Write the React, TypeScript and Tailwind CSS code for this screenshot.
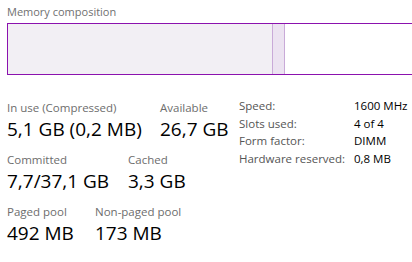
const font = { fontFamily: '"Segoe UI", "Open Sans", "Noto Sans", sans-serif' };

function Stat({ label, value, w }: { label: string; value: string; w: string }) {
  return (
    <div className={`${w} shrink-0`}>
      <div className="text-[11.5px] leading-[16px] text-[#6d6d6d]">{label}</div>
      <div className="text-[19px] leading-[26px] text-black">{value}</div>
    </div>
  );
}

const specs = [
  ['Speed:', '1600 MHz'],
  ['Slots used:', '4 of 4'],
  ['Form factor:', 'DIMM'],
  ['Hardware reserved:', '0,8 MB'],
];

export default function App() {
  return (
    <div className="w-[412px] h-[262px] overflow-hidden bg-white" style={font}>
      <div className="pl-[7px] pt-[4px] text-[11px] leading-[15px] text-[#707070]">Memory composition</div>
      <div className="ml-[7px] mt-[4px] w-[420px] h-[52px] border border-[#8b12ae] flex">
        <div className="w-[264px] bg-[#f2eff4]" />
        <div className="w-[13px] bg-[#ece3f1] border-x border-[#c9aad8]" />
        <div className="flex-1 bg-white" />
      </div>
      <div className="flex mt-[25px]">
        <div className="w-[232px] pl-[7px] flex flex-col gap-[10px]">
          <div className="flex">
            <Stat label="In use (Compressed)" value="5,1 GB (0,2 MB)" w="w-[153px]" />
            <Stat label="Available" value="26,7 GB" w="w-[70px]" />
          </div>
          <div className="flex">
            <Stat label="Committed" value="7,7/37,1 GB" w="w-[121px]" />
            <Stat label="Cached" value="3,3 GB" w="w-[80px]" />
          </div>
          <div className="flex">
            <Stat label="Paged pool" value="492 MB" w="w-[88px]" />
            <Stat label="Non-paged pool" value="173 MB" w="w-[100px]" />
          </div>
        </div>
        <div className="pl-[7px] -mt-[2px] grid grid-cols-[115px_auto] auto-rows-[17.5px] text-[11.5px] leading-[16px]">
          {specs.map(([k, v]) => (
            <div key={k} className="contents">
              <div className="text-[#555555]">{k}</div>
              <div className="text-black">{v}</div>
            </div>
          ))}
        </div>
      </div>
    </div>
  );
}
